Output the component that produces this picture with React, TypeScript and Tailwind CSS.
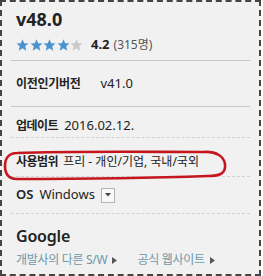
import React from "react";

const Star = ({ color }: { color: string }) => (
  <svg width="13" height="12" viewBox="0 0 24 23" className="block">
    <polygon
      points="12,0.5 15.2,8 23.5,8.6 17.2,14 19.2,22.3 12,17.8 4.8,22.3 6.8,14 0.5,8.6 8.8,8"
      fill={color}
    />
  </svg>
);

const Arrow = () => (
  <svg width="5" height="7" viewBox="0 0 5 7" className="inline-block ml-[5px]">
    <polygon points="0,0 5,3.5 0,7" fill="#555" />
  </svg>
);

export default function App() {
  return (
    <div
      className="relative w-[261px] h-[276px] border-2 border-dashed border-[#444] bg-[#f1f1f1] px-[9px] text-[#222]"
      style={{ fontFamily: '"Noto Sans", "Noto Sans CJK KR", sans-serif' }}
    >
      {/* title + rating */}
      <div className="h-[58px] pl-[5px] pt-[5px]">
        <div className="text-[18px] leading-[24px] font-bold">v48.0</div>
        <div className="mt-[7px] flex items-center h-[14px]">
          <div className="flex gap-[0.5px]">
            <Star color="#4a93cf" />
            <Star color="#4a93cf" />
            <Star color="#4a93cf" />
            <Star color="#4a93cf" />
            <Star color="#c9c9c9" />
          </div>
          <span className="ml-[8px] text-[13px] font-bold">4.2</span>
          <span className="ml-[4px] text-[12px] text-[#555]">(315명)</span>
        </div>
      </div>
      <div className="h-px bg-[#c6c6c6]" />
      {/* previous popular version */}
      <div className="h-[45px] pl-[5px] flex items-center">
        <span className="text-[12px] font-bold tracking-[-0.3px]">이전인기버전</span>
        <span className="ml-[20px] text-[13px]">v41.0</span>
      </div>
      <div className="h-px bg-[#c6c6c6]" />
      {/* update */}
      <div className="h-[30px] pl-[5px] flex items-center pt-[8px]">
        <span className="text-[12px] font-bold tracking-[-0.5px]">업데이트</span>
        <span className="ml-[6px] text-[13px]">2016.02.12.</span>
      </div>
      <div className="border-t border-dashed border-[#d2d2d2]" />
      {/* license */}
      <div className="h-[38px] pl-[5px] flex items-center pt-[10px]">
        <span className="text-[12px] font-bold tracking-[-0.5px]">사용범위</span>
        <span className="ml-[5px] text-[12px]">프리 - 개인/기업, 국내/국외</span>
      </div>
      <div className="border-t border-dashed border-[#d2d2d2]" />
      {/* OS */}
      <div className="h-[36px] pl-[5px] flex items-center">
        <span className="text-[13px] font-semibold">OS</span>
        <span className="ml-[6px] text-[13px]">Windows</span>
        <span className="ml-[6px] w-[14px] h-[15px] border border-[#b4b4b4] bg-[#f8f8f8] flex items-center justify-center">
          <svg width="6" height="4" viewBox="0 0 6 4">
            <polygon points="0,0 6,0 3,3.5" fill="#444" />
          </svg>
        </span>
      </div>
      <div className="border-t border-dashed border-[#d2d2d2]" />
      {/* developer */}
      <div className="pl-[5px] pt-[12px]">
        <div className="text-[16px] leading-[20px] font-semibold tracking-[-0.2px]">Google</div>
        <div className="mt-[5px] flex items-center text-[12px] text-[#6b98a8] tracking-[-0.3px]">
          <span className="flex items-center">
            개발사의 다른 S/W
            <Arrow />
          </span>
          <span className="ml-[20px] flex items-center">
            공식 웹사이트
            <Arrow />
          </span>
        </div>
      </div>
      {/* red annotation */}
      <svg
        className="absolute left-[1px] top-[147px] pointer-events-none"
        width="226"
        height="34"
        viewBox="0 0 226 34"
      >
        <path
          d="M14 4 C 70 2, 150 3, 200 3 C 214 2, 221 8, 222 15 C 223 24, 218 27, 205 27 C 150 29, 70 30, 14 30 C 5 30, 2 24, 2 17 C 2 9, 6 4, 14 4 Z"
          fill="none"
          stroke="#c4161c"
          strokeWidth="2.6"
        />
      </svg>
    </div>
  );
}
